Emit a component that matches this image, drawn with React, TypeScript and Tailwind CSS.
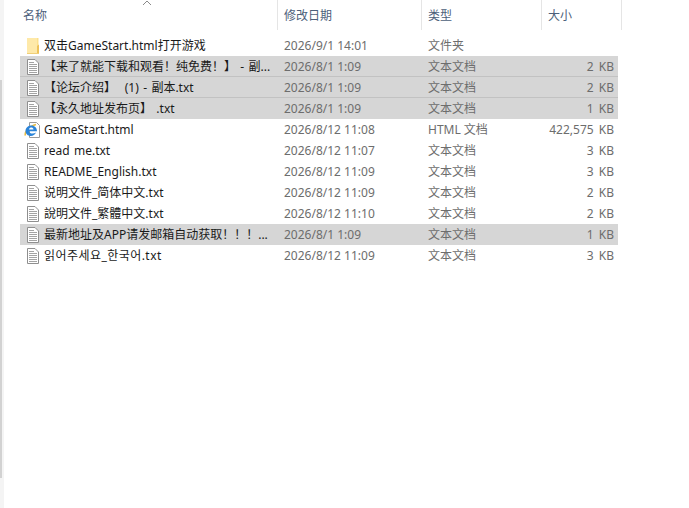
import React from "react";

const FONT = "font-['Noto_Sans','Noto_Sans_CJK_SC','Noto_Sans_CJK_KR',sans-serif]";

type Row = {
  name: string;
  date: string;
  type: string;
  size: string;
  icon: "folder" | "txt" | "ie";
  grey?: boolean;
  line?: boolean;
  wide?: boolean;
};

const ROWS: Row[] = [
  { name: "双击GameStart.html打开游戏", date: "2026/9/1 14:01", type: "文件夹", size: "", icon: "folder" },
  { name: "【来了就能下载和观看！纯免费！】 - 副...", date: "2026/8/1 1:09", type: "文本文档", size: "2 KB", icon: "txt", grey: true, line: true },
  { name: "【论坛介绍】\u00A0\u00A0(1) - 副本.txt", date: "2026/8/1 1:09", type: "文本文档", size: "2 KB", icon: "txt", grey: true, line: true },
  { name: "【永久地址发布页】 .txt", date: "2026/8/1 1:09", type: "文本文档", size: "1 KB", icon: "txt", grey: true },
  { name: "GameStart.html", date: "2026/8/12 11:08", type: "HTML 文档", size: "422,575 KB", icon: "ie" },
  { name: "read me.txt", date: "2026/8/12 11:07", type: "文本文档", size: "3 KB", icon: "txt" },
  { name: "README_English.txt", date: "2026/8/12 11:09", type: "文本文档", size: "3 KB", icon: "txt" },
  { name: "说明文件_简体中文.txt", date: "2026/8/12 11:09", type: "文本文档", size: "2 KB", icon: "txt" },
  { name: "說明文件_繁體中文.txt", date: "2026/8/12 11:10", type: "文本文档", size: "2 KB", icon: "txt" },
  { name: "最新地址及APP请发邮箱自动获取！！！...", date: "2026/8/1 1:09", type: "文本文档", size: "1 KB", icon: "txt", grey: true },
  { name: "읽어주세요_한국어.txt", date: "2026/8/12 11:09", type: "文本文档", size: "3 KB", icon: "txt", wide: true },
];

function TxtIcon() {
  return (
    <svg width="16" height="16" viewBox="0 0 16 16" fill="none">
      <path d="M1.5 0.5H9L12.5 4V15.5H1.5Z" fill="#fff" stroke="#8f8f8f" />
      <path d="M3 3.5H8M3 5.5H11M3 7.5H11M3 9.5H11M3 11.5H11M3 13.5H11" stroke="#a3a3a3" />
    </svg>
  );
}

function FolderIcon() {
  return (
    <svg width="16" height="16" viewBox="0 0 16 16">
      <path d="M1 0H12.5V16H1Z" fill="#fde08c" />
      <path d="M1 0H11V16H1Z" fill="#fee9a9" />
      <path d="M11 8L13 6.5V16H11Z" fill="#eec25a" />
      <path d="M1 15.5H13" stroke="#f0cf78" />
    </svg>
  );
}

function IeIcon() {
  return (
    <svg className="-ml-[2px]" width="18" height="16" viewBox="0 0 18 16" fill="none">
      <path d="M5.5 0.5H12.5L15.5 3.5V15.5H5.5Z" fill="#fff" stroke="#9a9a9a" />
      <path d="M1.5 13.5C0 11 5 4 12 2.5" stroke="#e9bd45" strokeWidth="1.6" />
      <path d="M1.5 9C1.5 5.5 4.5 3.5 7.5 3.5C10.5 3.5 13 5.8 13 9.2H5C5.2 11.4 9 12.3 12 10.6C11 13 9 14 7 14C3.8 14 1.5 11.8 1.5 9Z" fill="#2b84d8" />
      <path d="M5 7.4C5.3 6.2 6.3 5.6 7.3 5.6C8.3 5.6 9.3 6.2 9.5 7.4Z" fill="#fff" />
    </svg>
  );
}

function FileIcon({ kind }: { kind: Row["icon"] }) {
  if (kind === "folder") return <FolderIcon />;
  if (kind === "ie") return <IeIcon />;
  return <TxtIcon />;
}

export default function App() {
  return (
    <div className={`flex h-[508px] w-[689px] overflow-hidden bg-white text-[12px] ${FONT}`}>
      {/* sliver of the window behind */}
      <div className="w-[4px] shrink-0 bg-[#f4f4f4] pt-[80px]">
        <div className="h-[398px] w-[2px] bg-[#d2d2d2]" />
      </div>

      <div className="ml-[16px] flex-1">
        {/* header */}
        <div className="flex h-[35px] items-start">
          <div className="relative flex h-[30px] w-[258px] items-center border-r border-[#e5e5e5] pl-[3px] pt-px text-[#4c607a]">
            名称
            <svg className="absolute left-[122px] top-0" width="10" height="6" viewBox="0 0 10 6" fill="none">
              <path d="M1 5L5 1L9 5" stroke="#8a8a8a" />
            </svg>
          </div>
          <div className="flex h-[30px] w-[144px] items-center border-r border-[#e5e5e5] pl-[6px] pt-px text-[#4c607a]">修改日期</div>
          <div className="flex h-[30px] w-[120px] items-center border-r border-[#e5e5e5] pl-[6px] pt-px text-[#4c607a]">类型</div>
          <div className="flex h-[30px] w-[80px] items-center border-r border-[#e5e5e5] pl-[6px] pt-px text-[#4c607a]">大小</div>
        </div>

        {/* rows */}
        <div className="w-[598px]">
          {ROWS.map((r) => (
            <div
              key={r.name}
              className={`flex h-[21px] items-center ${r.grey ? "bg-[#d6d6d6]" : ""} ${r.line ? "shadow-[inset_0_-1px_0_#c2c2c2]" : ""}`}
            >
              <div className="flex w-[258px] items-center pl-[6px]">
                <div className="w-[16px] shrink-0">
                  <FileIcon kind={r.icon} />
                </div>
                <span className={`ml-[2px] whitespace-nowrap text-[#1a1a1a] [word-spacing:1.25px] ${r.wide ? "tracking-[0.45px]" : ""}`}>
                  {r.name}
                </span>
              </div>
              <div className="w-[144px] pl-[6px] text-[#6d6d6d]">{r.date}</div>
              <div className="w-[120px] pl-[6px] text-[#6d6d6d]">{r.type}</div>
              <div className="flex-1 pr-[4px] text-right text-[#6d6d6d] [word-spacing:2px]">{r.size}</div>
            </div>
          ))}
        </div>
      </div>
    </div>
  );
}
